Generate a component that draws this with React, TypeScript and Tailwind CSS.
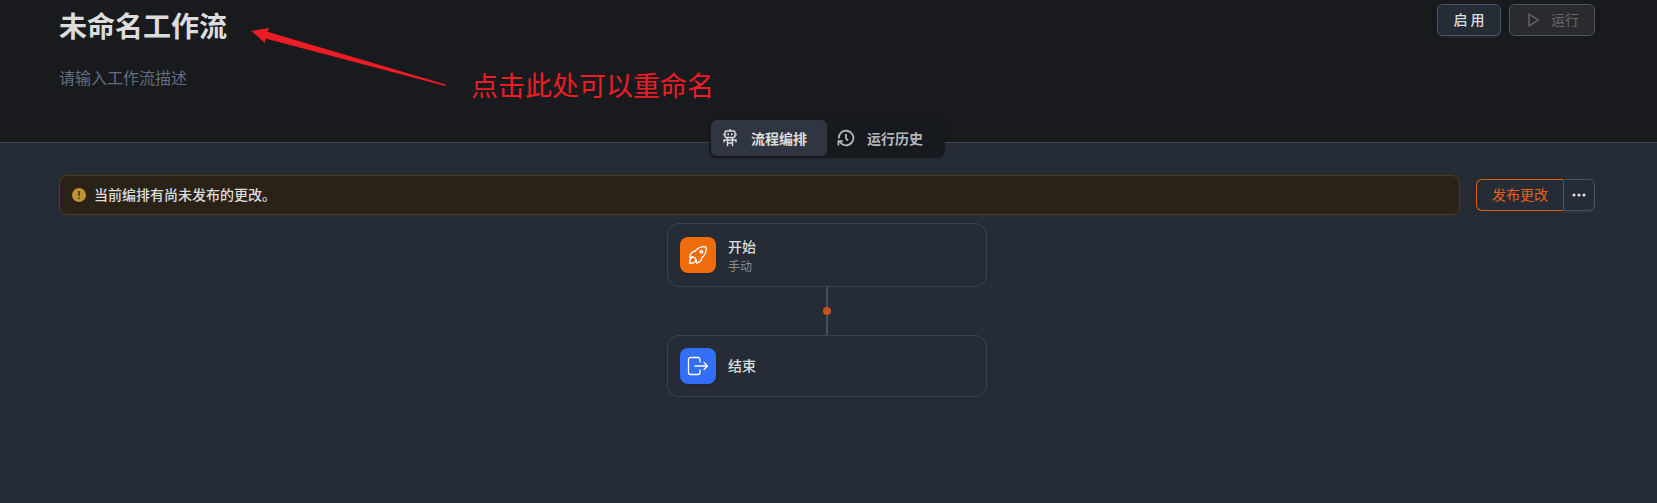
import React, { useState } from 'react';

const RobotIcon = () => (
  <svg width="16" height="18" viewBox="0 0 16 18" fill="none" stroke="currentColor" strokeWidth="1.5" aria-hidden="true">
    <path d="M8 0V2" />
    <rect x="3" y="2" width="10" height="6.6" rx="1.5" />
    <path d="M6.2 4.2V6.2M9.8 4.2V6.2" />
    <path d="M1.8 4.5V6.5M14.2 4.5V6.5" strokeWidth="1" />
    <path d="M2 13.5V11H14V13.5M5.5 8.6V17.2M10.5 8.6V17.2M5.5 14H10.5" strokeWidth="1.4" />
  </svg>
);

const HistoryIcon = () => (
  <svg width="18" height="18" viewBox="0 0 18 18" fill="none" stroke="currentColor" strokeWidth="1.8" aria-hidden="true">
    <path d="M1.8 9.5A7.3 7.3 0 1 1 5.4 15.3L2 12.4" />
    <path d="M1.4 16.4V12.2H5.8" />
    <path d="M9 5V9.5L11 11.5" />
  </svg>
);

const RocketIcon = () => (
  <svg width="20" height="20" viewBox="0 0 20 20" fill="none" stroke="currentColor" strokeWidth="1.3" strokeLinecap="round" strokeLinejoin="round" aria-hidden="true">
    <path d="M7 6.2C9.4 3.2 12.4 1.7 16.4 1.7C17.8 1.7 18.4 2.4 18.3 3.8C18.1 7.6 16.6 10.6 13.8 12.8C13.4 15.6 11.6 17.4 8.6 18L8 14.8" />
    <path d="M7 6.2C3.8 7 1.9 9.2 1.8 12.4L4.6 12" />
    <circle cx="13.4" cy="6.8" r="1.3" />
    <path d="M5 11.8C2.6 12.4 1.6 14.6 1.6 18.2C5 18.4 7.4 17.2 8 14.8C7.6 13.2 6.6 12.2 5 11.8Z" />
  </svg>
);

const ExitIcon = () => (
  <svg width="22" height="20" viewBox="0 0 22 20" fill="none" stroke="currentColor" strokeWidth="1.3" strokeLinecap="round" strokeLinejoin="round" aria-hidden="true">
    <path d="M13 6V3.5A2 2 0 0 0 11 1.5H3.5A2 2 0 0 0 1.5 3.5V16.5A2 2 0 0 0 3.5 18.5H11A2 2 0 0 0 13 16.5V14" />
    <path d="M8 10H20.5M17 6.5L20.5 10L17 13.5" />
  </svg>
);

const tabs = [
  { key: 'flow', label: '流程编排', icon: <RobotIcon /> },
  { key: 'history', label: '运行历史', icon: <HistoryIcon /> },
];

export default function App() {
  const [active, setActive] = useState('flow');
  const [desc, setDesc] = useState('');

  return (
    <div className="relative min-h-screen bg-[#262c36] font-['Noto_Sans_CJK_SC',sans-serif] text-sm text-[#dcdcdc]">
      <header className="flex h-[143px] items-start justify-between border-b border-[#3c4557] bg-[#191a1d] pl-[59px] pr-[62px] pt-1">
        <div className="flex flex-col">
          <h1 className="text-[28px] font-bold leading-[43px]">未命名工作流</h1>
          <input
            aria-label="工作流描述"
            value={desc}
            onChange={(e) => setDesc(e.target.value)}
            placeholder="请输入工作流描述"
            className="mt-4 w-80 bg-transparent text-base leading-7 outline-none placeholder:text-[#646d82]"
          />
        </div>
        <div className="flex gap-2">
          <button className="h-8 w-16 rounded-md border border-[#475569] bg-[#262c36] pb-0.5 font-medium shadow-[0_2px_0_#222429]">启 用</button>
          <button disabled className="flex h-8 items-center gap-2 rounded-md border border-[#475569] bg-[#2a2b2e] px-[15px] text-[#68696b]">
            <svg width="18" height="14" viewBox="0 0 18 14" fill="none" stroke="currentColor" strokeWidth="1.3" aria-hidden="true">
              <path d="M4 1.2L13.5 7L4 12.8Z" />
            </svg>
            <span className="pb-0.5">运行</span>
          </button>
        </div>
      </header>

      {/* 标签切换 */}
      <nav className="relative -mt-[25px] flex justify-center pr-[3px]">
        <div className="flex rounded-lg bg-[#16191d] p-0.5 shadow-sm">
          {tabs.map((t) => (
            <button
              key={t.key}
              onClick={() => setActive(t.key)}
              className={`flex h-9 w-29 items-center rounded-md font-bold ${active === t.key ? 'bg-[#2f3641]' : 'text-[#b5b6b8]'}`}
            >
              <span className="ml-[10px] flex w-[18px] justify-center">{t.icon}</span>
              <span className="ml-3">{t.label}</span>
            </button>
          ))}
        </div>
      </nav>

      <main className="pt-[17px]">
        <div className="flex items-center gap-4 pl-[59px] pr-[62px]">
          <div role="alert" className="flex h-10 flex-1 items-center gap-2 rounded-lg border border-[#4f3d1b] bg-[#2a2216] px-3">
            <svg width="14" height="14" viewBox="0 0 14 14" aria-hidden="true">
              <circle cx="7" cy="7" r="7" fill="#bc9234" />
              <path d="M7 3V8M7 9.5V11" stroke="#2a2216" strokeWidth="1.3" />
            </svg>
            <span className="pb-0.5 font-medium">当前编排有尚未发布的更改。</span>
          </div>
          <div className="flex">
            <button className="h-8 rounded-l-md border border-r-0 border-[#d9610f] px-[15px] pb-0.5 text-[#e8601c]">发布更改</button>
            <button aria-label="更多" className="flex h-8 w-8 items-center justify-center rounded-r-md border border-[#475569] shadow-[0_2px_0_#2e343e]">
              <svg width="14" height="4" viewBox="0 0 14 4" fill="currentColor" aria-hidden="true">
                <circle cx="2" cy="2" r="1.6" />
                <circle cx="7" cy="2" r="1.6" />
                <circle cx="12" cy="2" r="1.6" />
              </svg>
            </button>
          </div>
        </div>

        {/* 流程节点 */}
        <div className="mt-2 flex flex-col items-center pr-[3px]">
          <div className="flex h-16 w-80 items-center gap-3 rounded-xl border border-[#3c4454] px-3">
            <div className="flex size-9 items-center justify-center rounded-lg bg-[#ef6c0c] text-white shadow-sm">
              <RocketIcon />
            </div>
            <div className="pt-0.5">
              <div className="font-medium leading-5">开始</div>
              <div className="text-xs leading-5 text-[#8a8c90]">手动</div>
            </div>
          </div>
          <div className="flex h-12 w-0.5 items-center justify-center bg-[#454f66]">
            <span className="size-2 shrink-0 rounded-full bg-[#c3521c]" />
          </div>
          <div className="flex h-[62px] w-80 items-center gap-3 rounded-xl border border-[#3c4454] px-3">
            <div className="flex size-9 items-center justify-center rounded-lg bg-[#326ff6] text-white shadow-sm">
              <ExitIcon />
            </div>
            <div className="pb-0.5 font-medium">结束</div>
          </div>
        </div>
      </main>

      {/* 重命名提示标注 */}
      <div className="pointer-events-none absolute left-[251px] top-[27px] flex text-[#ee1c24]">
        <svg width="196" height="60" viewBox="0 0 196 60" fill="currentColor" aria-hidden="true">
          <path d="M0.3 4L18.5 1L16.5 4.8L194.7 57.5L194.3 59L14.5 11.5L14 16Z" />
        </svg>
        <span className="ml-6 mt-10 whitespace-nowrap text-[27px] leading-9">点击此处可以重命名</span>
      </div>
    </div>
  );
}
